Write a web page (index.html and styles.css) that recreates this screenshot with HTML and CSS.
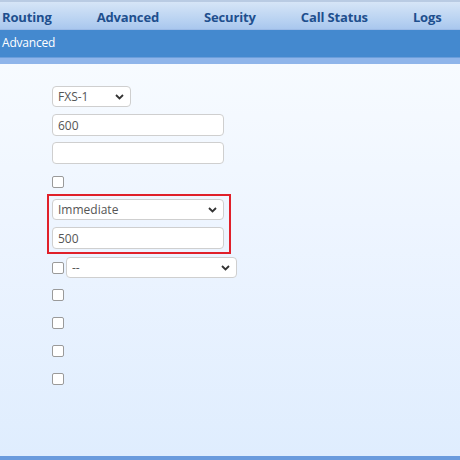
FILE: index.html
```html
<!DOCTYPE html>
<html>
<head>
<meta charset="utf-8">
<link rel="stylesheet" href="styles.css">
</head>
<body>
<div class="page">
  <nav class="topnav">
    <span class="nav-item">Routing</span>
    <span class="nav-item">Advanced</span>
    <span class="nav-item">Security</span>
    <span class="nav-item">Call Status</span>
    <span class="nav-item">Logs</span>
  </nav>
  <div class="titlebar">Advanced</div>
  <div class="strip"></div>
  <main class="content">
    <div class="form">
      <select class="field sel-short row-first"><option>FXS-1</option></select>
      <input class="field txt row-a" type="text" value="600">
      <input class="field txt row-b" type="text" value="">
      <input class="cb row-cb1" type="checkbox">
      <div class="highlight">
        <select class="field sel-long"><option>Immediate</option></select>
        <input class="field txt hl-input" type="text" value="500">
      </div>
      <div class="combo">
        <input class="cb" type="checkbox">
        <select class="field sel-combo"><option>--</option></select>
      </div>
      <input class="cb cb-after" type="checkbox">
      <input class="cb cb-next" type="checkbox">
      <input class="cb cb-next" type="checkbox">
      <input class="cb cb-next" type="checkbox">
    </div>
  </main>
  <div class="footer-bar"></div>
</div>
</body>
</html>
```

FILE: styles.css
```css
html, body {
  margin: 0;
  padding: 0;
}
body {
  width: 460px;
  height: 460px;
  overflow: hidden;
  font-family: "Open Sans", "Noto Sans", sans-serif;
}
.page {
  display: flex;
  flex-direction: column;
  height: 460px;
}
.topnav {
  border-top: 2px solid #b9cbe3;
  background: linear-gradient(#d6e5f7, #b7d1f1 70%, #a9c7ee);
  display: flex;
  align-items: center;
  gap: 45px;
  padding-left: 2px;
  padding-top: 2px;
  box-sizing: border-box;
  height: 30px;
  border-bottom: 1px solid #9dbbe6;
}
.nav-item {
  font-family: "Open Sans", sans-serif;
  font-weight: 700;
  font-size: 13px;
  color: #1e4f8e;
  white-space: nowrap;
  letter-spacing: -0.15px;
}
.titlebar {
  height: 27px;
  background: #4489cf;
  color: #ffffff;
  font-size: 12px;
  line-height: 26px;
  padding-left: 2px;
  border-bottom: 1px solid #6b9edb;
  letter-spacing: -0.2px;
}
.strip {
  height: 6px;
  background: #8fb5ea;
}
.content {
  flex: 1;
  background: linear-gradient(#f7fbff, #eef5ff 40%, #dfedfe);
}
.form {
  display: flex;
  flex-direction: column;
  align-items: flex-start;
  padding-left: 47px;
  padding-top: 22px;
}
.field {
  box-sizing: border-box;
  font-family: "Open Sans", "Noto Sans", sans-serif;
  font-size: 12px;
  color: #555555;
  background-color: #ffffff;
  border: 1px solid #cfcfcf;
  border-radius: 4px;
  margin: 0;
  padding: 0 5px;
  outline: none;
}
select.field {
  appearance: none;
  -webkit-appearance: none;
  background-image: url("data:image/svg+xml,%3Csvg xmlns='http://www.w3.org/2000/svg' width='9' height='6' viewBox='0 0 9 6'%3E%3Cpath d='M1 1l3.5 3.5L8 1' fill='none' stroke='%23333' stroke-width='1.8'/%3E%3C/svg%3E");
  background-repeat: no-repeat;
  background-position: right 6px center;
}
.sel-short {
  width: 79px;
  height: 21px;
  margin-left: 5px;
}
.row-first { margin-top: 0; }
.txt {
  width: 172px;
  height: 22px;
  margin-left: 5px;
}
.row-a { margin-top: 7px; }
.row-b { margin-top: 6px; }
.cb {
  appearance: none;
  -webkit-appearance: none;
  box-sizing: border-box;
  width: 12px;
  height: 12px;
  margin: 0;
  border: 1.5px solid #9a9a9a;
  border-radius: 2px;
  background: #ffffff;
  flex: none;
}
.row-cb1 {
  margin-left: 5px;
  margin-top: 12px;
}
.highlight {
  margin-top: 6px;
  border: 2px solid #e0202a;
  padding: 3px 5px 3px 3px;
  display: flex;
  flex-direction: column;
  gap: 7px;
}
.highlight .txt {
  margin-left: 0;
}
.sel-long {
  width: 172px;
  height: 21px;
}
.combo {
  margin-top: 3px;
  margin-left: 5px;
  display: flex;
  align-items: center;
  gap: 2px;
}
.sel-combo {
  width: 171px;
  height: 21px;
}
.cb-after {
  margin-left: 5px;
  margin-top: 11px;
}
.cb-next {
  margin-left: 5px;
  margin-top: 16px;
}
.footer-bar {
  height: 4px;
  background: #6a9bdd;
}
```
